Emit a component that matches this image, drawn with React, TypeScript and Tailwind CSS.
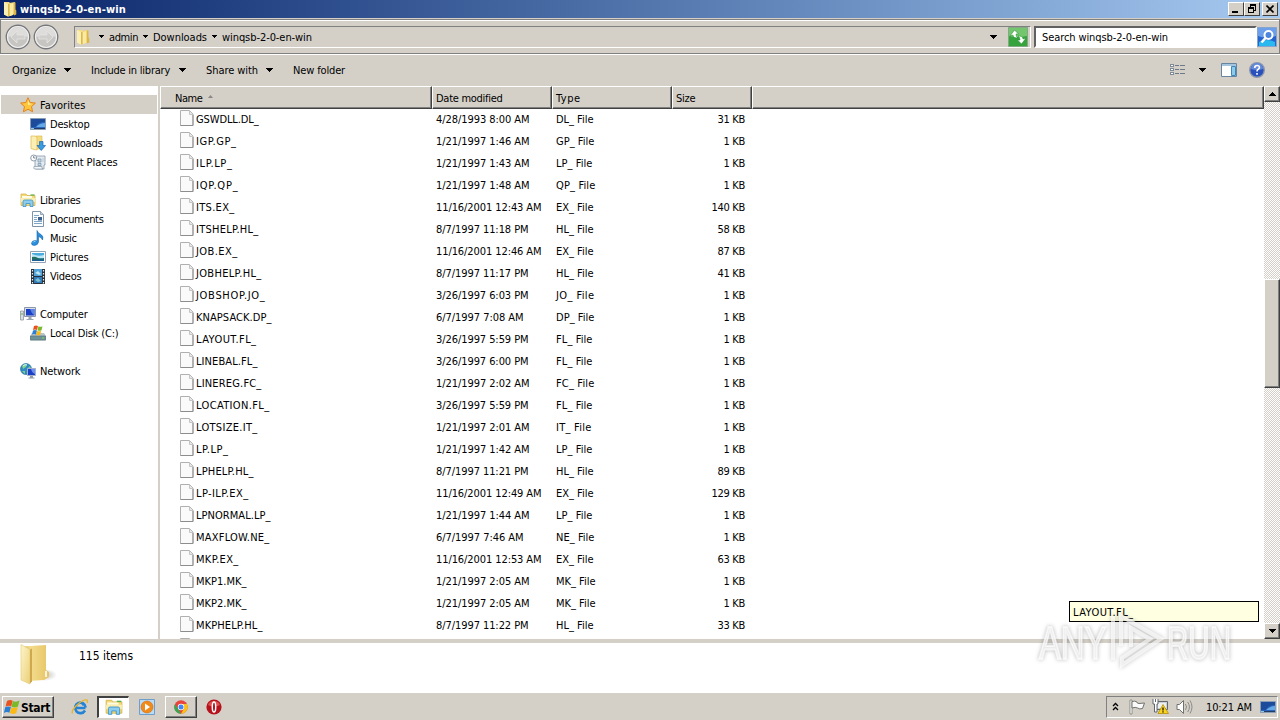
import React from 'react';

const files: string[][] = [
  ['GSWDLL.DL_', '4/28/1993 8:00 AM', 'DL_ File', '31 KB'],
  ['IGP.GP_', '1/21/1997 1:46 AM', 'GP_ File', '1 KB'],
  ['ILP.LP_', '1/21/1997 1:43 AM', 'LP_ File', '1 KB'],
  ['IQP.QP_', '1/21/1997 1:48 AM', 'QP_ File', '1 KB'],
  ['ITS.EX_', '11/16/2001 12:43 AM', 'EX_ File', '140 KB'],
  ['ITSHELP.HL_', '8/7/1997 11:18 PM', 'HL_ File', '58 KB'],
  ['JOB.EX_', '11/16/2001 12:46 AM', 'EX_ File', '87 KB'],
  ['JOBHELP.HL_', '8/7/1997 11:17 PM', 'HL_ File', '41 KB'],
  ['JOBSHOP.JO_', '3/26/1997 6:03 PM', 'JO_ File', '1 KB'],
  ['KNAPSACK.DP_', '6/7/1997 7:08 AM', 'DP_ File', '1 KB'],
  ['LAYOUT.FL_', '3/26/1997 5:59 PM', 'FL_ File', '1 KB'],
  ['LINEBAL.FL_', '3/26/1997 6:00 PM', 'FL_ File', '1 KB'],
  ['LINEREG.FC_', '1/21/1997 2:02 AM', 'FC_ File', '1 KB'],
  ['LOCATION.FL_', '3/26/1997 5:59 PM', 'FL_ File', '1 KB'],
  ['LOTSIZE.IT_', '1/21/1997 2:01 AM', 'IT_ File', '1 KB'],
  ['LP.LP_', '1/21/1997 1:42 AM', 'LP_ File', '1 KB'],
  ['LPHELP.HL_', '8/7/1997 11:21 PM', 'HL_ File', '89 KB'],
  ['LP-ILP.EX_', '11/16/2001 12:49 AM', 'EX_ File', '129 KB'],
  ['LPNORMAL.LP_', '1/21/1997 1:44 AM', 'LP_ File', '1 KB'],
  ['MAXFLOW.NE_', '6/7/1997 7:46 AM', 'NE_ File', '1 KB'],
  ['MKP.EX_', '11/16/2001 12:53 AM', 'EX_ File', '63 KB'],
  ['MKP1.MK_', '1/21/1997 2:05 AM', 'MK_ File', '1 KB'],
  ['MKP2.MK_', '1/21/1997 2:05 AM', 'MK_ File', '1 KB'],
  ['MKPHELP.HL_', '8/7/1997 11:22 PM', 'HL_ File', '33 KB'],
];

const raised = 'border border-t-white border-l-white border-r-[#404040] border-b-[#404040]';

// Advance widths of the 11px system face, used to keep labels at their native length
const advances: Record<string, number> = {
  ' ': 3, '!': 4, '(': 4, ')': 4, '-': 4, '.': 4, ',': 3, '/': 4, ':': 4, '_': 6,
  A: 7, B: 6, C: 7, D: 7, E: 6, F: 6, G: 7, H: 7, I: 4, J: 5, K: 6, L: 5, M: 8, N: 7, O: 8, P: 6,
  Q: 8, R: 7, S: 6, T: 6, U: 7, V: 6, W: 10, X: 6, Y: 6, Z: 6,
  a: 6, b: 6, c: 5, d: 6, e: 6, f: 4, g: 6, h: 6, i: 2, j: 3, k: 5, l: 2, m: 8, n: 6, o: 6, p: 6,
  q: 6, r: 4, s: 5, t: 4, u: 6, v: 6, w: 8, x: 6, y: 6, z: 5,
};

function Label({ text, width, className = '' }: { text: string; width?: number; className?: string }) {
  const ref = React.useRef<HTMLSpanElement>(null);

  React.useLayoutEffect(() => {
    const el = ref.current;
    if (!el) return;
    el.style.letterSpacing = '0px';
    const target = width ?? text.split('').reduce((sum, c) => sum + (advances[c] ?? 6), 0.5);
    el.style.letterSpacing = `${(target - el.getBoundingClientRect().width) / text.length}px`;
  }, [text, width]);

  return (
    <span className={`inline-block pt-0.5 whitespace-pre ${className}`}>
      <span ref={ref}>{text}</span>
    </span>
  );
}

function Caret({ small = false }: { small?: boolean }) {
  return small ? (
    <svg width="5" height="3" viewBox="0 0 5 3" shapeRendering="crispEdges"><path d="M0 0h5v1h-1v1h-1v1h-1v-1h-1v-1h-1z" /></svg>
  ) : (
    <svg width="7" height="4" viewBox="0 0 7 4" shapeRendering="crispEdges"><path d="M0 0h7v1h-1v1h-1v1h-1v1h-1v-1h-1v-1h-1v-1h-1z" /></svg>
  );
}

function FolderIcon() {
  return (
    <svg width="16" height="16" viewBox="0 0 16 16">
      <path d="M7 2l6-1v12l-5 2z" fill="#f0d477" />
      <path d="M8 3l3-1v12l-3 1z" fill="#f9e9a3" />
      <path d="M12 1.500h1.500v7l.8 1v4l-2.300 1z" fill="#d9b647" />
      <path d="M2 1h5l1 1v13l-2 .5-4-2z" fill="#f4dc83" />
      <path d="M2 1l4 2v12.500l-4-2z" fill="#fbefb4" />
      <path d="M6 3v12.500l1.500-.5v-12z" fill="#dcb94e" />
    </svg>
  );
}

function LargeFolderIcon() {
  return (
    <svg width="42" height="44" viewBox="0 0 42 44">
      <defs>
        <linearGradient id="folderBack" x1="0" y1="0" x2="1" y2="0">
          <stop offset="0" stopColor="#dcb95e" />
          <stop offset=".3" stopColor="#f3dc8c" />
          <stop offset="1" stopColor="#e6c466" />
        </linearGradient>
        <linearGradient id="folderFront" x1="0" y1="0" x2="1" y2="1">
          <stop offset="0" stopColor="#fdf5c9" />
          <stop offset="1" stopColor="#ecd07a" />
        </linearGradient>
        <radialGradient id="folderShade">
          <stop offset="0" stopColor="#777" stopOpacity=".45" />
          <stop offset="1" stopColor="#777" stopOpacity="0" />
        </radialGradient>
      </defs>
      <ellipse cx="31" cy="32" rx="12" ry="6" fill="url(#folderShade)" />
      <path d="M9 3.500l23-1.500v25l3 2v5l-5 3-16 1z" fill="url(#folderBack)" />
      <path d="M32 28v6" stroke="#fff" strokeWidth="1.600" />
      <path d="M7 1.500l9 5v34.500l-9-4z" fill="url(#folderFront)" stroke="#e3c976" strokeWidth=".6" />
      <path d="M16 6.500l2-1v33l-2 2z" fill="#cfa94c" />
    </svg>
  );
}

function LibraryIcon({ size = 16 }: { size?: number }) {
  return (
    <svg width={size} height={size} viewBox="0 0 16 16">
      <path d="M1 2h5l1 1.500h8v10h-14z" fill="#f3dc79" stroke="#d3ae41" strokeWidth=".7" />
      <path d="M2 4h10v2h-10z" fill="#fffbe4" />
      <path d="M10.500 3h4" stroke="#57b14c" strokeWidth="1.200" />
      <path d="M1 6h14v4h-14z" fill="#fbeeb1" />
      <path d="M3 14.500v-5q0-1.500 1.500-1.500h7q1.500 0 1.500 1.500v5h-3v-3h-4v3z" fill="#8dcdef" stroke="#3d91c8" strokeWidth=".8" />
    </svg>
  );
}

function StarIcon() {
  return (
    <svg width="16" height="16" viewBox="0 0 16 16">
      <path d="M8 .7l2.200 4.800 5.200.6-3.900 3.500 1.100 5.200L8 12.200l-4.600 2.600 1.100-5.200L.6 6.100l5.200-.6z" fill="#fdc63c" stroke="#e5821d" strokeWidth="1" />
      <path d="M8 3l1.500 3.500 3 .5-4.500 1z" fill="#fff0a0" />
    </svg>
  );
}

function DesktopIcon() {
  return (
    <svg width="16" height="16" viewBox="0 0 16 16">
      <path d="M.5 2.500h15v11h-15z" fill="#2a66be" stroke="#8b9cb4" />
      <path d="M1 3h14v3q-7 0-9 5h-5z" fill="#1d4b9c" />
      <path d="M6 11q4-4 9-4v4z" fill="#65a9e6" />
      <path d="M1 12h14v1h-14z" fill="#233c64" />
      <path d="M1 12h3v1h-3z" fill="#8dc8e8" />
    </svg>
  );
}

function DownloadsIcon() {
  return (
    <svg width="16" height="16" viewBox="0 0 16 16">
      <path d="M6 1h6v13h-6z" fill="#f4dc83" stroke="#d9b647" strokeWidth=".6" />
      <path d="M1 1h4l2 1v13l-3-.5-3-1z" fill="#fbefb4" stroke="#dcb94e" strokeWidth=".7" />
      <path d="M9.500 6.500h3.500v4h2.500l-4.200 5-4.300-5h2.500z" fill="#3a9be0" stroke="#1b68b0" strokeWidth=".7" />
    </svg>
  );
}

function RecentIcon() {
  return (
    <svg width="16" height="16" viewBox="0 0 16 16">
      <path d="M5 2h10v9h-1v4h-8q-2 0-1-2z" fill="#e4eaf0" stroke="#8798a8" strokeWidth=".8" />
      <path d="M8 5h3v3h-3zM8 9.500h3v2h-3zM12.500 5h1M12.500 7h1" fill="#c5d7e6" stroke="#7892a9" strokeWidth=".7" />
      <path d="M4 12.500h8q-.5 2.500 1 2.500h-8q-2 0-1-2.500z" fill="#f5f7f9" stroke="#8798a8" strokeWidth=".7" />
      <circle cx="3.700" cy="4" r="3" fill="#fff" stroke="#8d9ba9" />
      <path d="M3.700 2v2h1.800" fill="none" stroke="#546779" strokeWidth=".8" />
    </svg>
  );
}

function DocumentIcon() {
  return (
    <svg width="16" height="16" viewBox="0 0 16 16">
      <path d="M2.500.5h8l3 3v12h-11z" fill="#fbfdff" stroke="#8094a8" />
      <path d="M10.500.5v3h3" fill="#c5d6e5" stroke="#8094a8" strokeWidth=".8" />
      <path d="M4 4.500h5M4 6.500h3M4 8.500h3M4 10.500h8M4 12.500h8" stroke="#7fa6c6" />
      <path d="M8 6h4v3.500h-4z" fill="#3d5f8f" />
    </svg>
  );
}

function MusicIcon() {
  return (
    <svg width="16" height="16" viewBox="0 0 16 16">
      <path d="M7 .5q1 3 4 4 3 2 1.500 5.500-.8-3-4-3.500v5.500q-.5 3-4 3.500-3 0-3-2.200 .3-2.500 3.500-2.800 1 0 2 .4z" fill="#2a8fdc" stroke="#1767ae" strokeWidth=".6" />
      <path d="M3 12.500q.8-1.500 2.500-1.300" fill="none" stroke="#9edcf8" />
    </svg>
  );
}

function PictureIcon() {
  return (
    <svg width="16" height="16" viewBox="0 0 16 16">
      <path d="M.5 2.500h15v11h-15z" fill="#fff" stroke="#90a4b6" />
      <path d="M2 4h12v8h-12z" fill="#4bacde" />
      <path d="M2 5q6 3 12 1v3h-12z" fill="#bfe7f5" />
      <path d="M2 8q3-1 6 1 3 1 6 0v3h-12z" fill="#23705f" />
      <path d="M2 10.500h12v1.500h-12z" fill="#1c5c94" />
    </svg>
  );
}

function VideoIcon() {
  return (
    <svg width="16" height="16" viewBox="0 0 16 16">
      <path d="M1 1h14v15h-14z" fill="#26313c" />
      <path d="M4 1h8v7h-8z" fill="#4fa3d8" />
      <path d="M4 9h8v6h-8z" fill="#317bb8" />
      <path d="M5 5l3-2 3 3-2 1z" fill="#c1e4ee" />
      <path d="M5 12l3-2 3 3-3 1z" fill="#7fc0cf" />
      <path d="M2.500 2v14M13.500 2v14" stroke="#e8eef2" strokeWidth="1.200" strokeDasharray="1.500 1.500" />
    </svg>
  );
}

function ComputerIcon() {
  return (
    <svg width="16" height="16" viewBox="0 0 16 16">
      <path d="M.5 5h3v9h-3z" fill="#d7dde2" stroke="#8d989f" strokeWidth=".8" />
      <path d="M1.500 7h1v2h-1z" fill="#69b44b" />
      <path d="M4.500 1.500h11v9h-11z" fill="#d9dee8" stroke="#8c96aa" />
      <path d="M6 3h8.500v6.500h-8.500z" fill="#1b3fc4" />
      <path d="M10 3h4.500v6.500q-3-2-4.500-6.500z" fill="#5a83e8" />
      <path d="M8.500 11h3v2h2v1h-7v-1h2z" fill="#9ba5b1" />
    </svg>
  );
}

function WindowsFlag() {
  return (
    <svg width="16" height="16" viewBox="0 0 16 16">
      <path d="M3 2q3-2 5.700-.3l-1.500 5.800q-2.800-1.500-5.700.2z" fill="#e8541f" />
      <path d="M9 2q3 1.500 6.500-.4l-1.500 6q-3 1.700-6.500.2z" fill="#7ab929" />
      <path d="M1.200 8.300q3-1.700 5.700-.2l-1.500 5.700q-2.700-1.500-5.500.2z" fill="#2a7fd4" />
      <path d="M7.300 8.300q3 1.500 6.500-.2l-1.500 5.900q-3 1.700-6.500.1z" fill="#fbb916" />
    </svg>
  );
}

function DiskIcon() {
  return (
    <svg width="16" height="16" viewBox="0 0 16 16">
      <path d="M2 8h12l2 3v4.500h-16v-4.500z" fill="#b9c4c9" />
      <path d="M.5 11h15v4h-15z" fill="#6f9299" stroke="#56727a" strokeWidth=".7" />
      <path d="M12 12.500h2v1h-2z" fill="#78e04b" />
      <path d="M4 1q2-1 4 0l-1 4q-2-1-4 0z" fill="#e8541f" />
      <path d="M8.500 1.200q2 1 4 0l-1 4q-2 1-4 0z" fill="#7ab929" />
      <path d="M3 5.500q2-1 4 0l-1 4q-2-1-4 0z" fill="#2a7fd4" />
      <path d="M7.200 5.700q2 1 4 0l-1 4q-2 1-4 0z" fill="#fbb916" />
    </svg>
  );
}

function NetworkIcon() {
  return (
    <svg width="16" height="16" viewBox="0 0 16 16">
      <circle cx="6" cy="6" r="5.500" fill="#2f8bc4" stroke="#1a6090" strokeWidth=".6" />
      <path d="M2 3q3-3 5-2l-1 3-3 2zM7 6l3-3 1 3-2 3zM2 8l3 0 0 3z" fill="#7fd08a" />
      <path d="M3 3q2-2 4-1" stroke="#d6f5f8" fill="none" />
      <path d="M7.500 5.500h8v7h-8z" fill="#1b3fc4" stroke="#a5b1cc" />
      <path d="M11 6h4v5q-3-1-4-5z" fill="#6b92ee" />
      <path d="M10 13h3v1.500h1.500v1h-6v-1h1.500z" fill="#929daa" />
    </svg>
  );
}

function FileIcon() {
  return (
    <svg width="14" height="16" viewBox="0 0 14 16" className="shrink-0">
      <path d="M.5.5h9l3.500 3.500v11.500h-12.500z" fill="#fafafa" stroke="#b0b0b0" />
      <path d="M9.500 1v3.500h3.500" fill="#e6e6e6" stroke="#c4c4c4" />
      <path d="M13 5v10.500h-12.500" fill="none" stroke="#8d8d8d" />
    </svg>
  );
}

function NavArrow({ flip = false }: { flip?: boolean }) {
  return (
    <svg width="26" height="26" viewBox="0 0 26 26">
      <circle cx="13" cy="13" r="11.700" fill="#c7c5c2" stroke="#74777b" strokeWidth="1.400" />
      <circle cx="13" cy="13" r="10.500" fill="none" stroke="#efefee" strokeWidth="1.200" />
      <path d="M3 13a10 10 0 0 1 20 0q-10-3-20 0z" fill="#dedddb" />
      <path
        d={flip ? 'M20 13l-6-6v4h-8v4h8v4z' : 'M6 13l6-6v4h8v4h-8v4z'}
        fill="#d0cfcd"
        stroke="#e4e4e2"
        strokeWidth=".8"
      />
    </svg>
  );
}

function NavItem({ icon, text, level = 1, active = false }: { icon: React.ReactNode; text: string; level?: number; active?: boolean }) {
  return (
    <div className={`flex h-[19px] items-center gap-1 ${level === 0 ? 'pl-[19px]' : 'pl-[29px]'} ${active ? 'bg-[#d4d0c8]' : ''}`}>
      {icon}
      <Label text={text} />
    </div>
  );
}

function Sidebar() {
  return (
    <div className="flex w-[157px] shrink-0 flex-col gap-[19px] bg-white pt-[9px] pl-px">
      <div>
        <NavItem level={0} active icon={<StarIcon />} text="Favorites" />
        <NavItem icon={<DesktopIcon />} text="Desktop" />
        <NavItem icon={<DownloadsIcon />} text="Downloads" />
        <NavItem icon={<RecentIcon />} text="Recent Places" />
      </div>
      <div>
        <NavItem level={0} icon={<LibraryIcon />} text="Libraries" />
        <NavItem icon={<DocumentIcon />} text="Documents" />
        <NavItem icon={<MusicIcon />} text="Music" />
        <NavItem icon={<PictureIcon />} text="Pictures" />
        <NavItem icon={<VideoIcon />} text="Videos" />
      </div>
      <div>
        <NavItem level={0} icon={<ComputerIcon />} text="Computer" />
        <NavItem icon={<DiskIcon />} text="Local Disk (C:)" />
      </div>
      <NavItem level={0} icon={<NetworkIcon />} text="Network" />
    </div>
  );
}

function TitleBar() {
  return (
    <div className="flex h-[18px] items-center bg-linear-to-r from-[#0a246a] to-[#a6caf0] pr-[2px] pl-[2px]">
      <FolderIcon />
      <Label text="winqsb-2-0-en-win" width={106} className="ml-[2px] font-bold text-white" />
      <div className="ml-auto flex">
        <div className={`flex h-[14px] w-4 items-end bg-[#d4d0c8] pb-[2px] pl-[3px] ${raised}`}>
          <span className="h-[2px] w-[6px] bg-black" />
        </div>
        <div className={`flex h-[14px] w-4 items-center justify-center bg-[#d4d0c8] ${raised}`}>
          <svg width="9" height="10" viewBox="0 0 9 10" shapeRendering="crispEdges">
            <path d="M2.500 3v-2h5v5h-2M.5 4.500h5v4h-5z" fill="none" stroke="#000" />
            <path d="M2 0h6v2h-6zM0 3h6v2h-6z" />
          </svg>
        </div>
        <div className={`ml-[2px] flex h-[14px] w-4 items-center justify-center bg-[#d4d0c8] ${raised}`}>
          <svg width="8" height="8" viewBox="0 0 8 8"><path d="M.5.5l7 7M7.500.5l-7 7" stroke="#000" strokeWidth="1.600" /></svg>
        </div>
      </div>
    </div>
  );
}

function AddressBar() {
  return (
    <div className="mt-px flex h-[35px] items-center border border-[#808080] pl-[4px] shadow-[inset_0_1px_0_#fff,0_1px_0_#fff]">
      <div className="flex gap-[2px]">
        <NavArrow />
        <NavArrow flip />
      </div>
      <div className="ml-[15px] flex h-[22px] w-[957px] shrink-0 items-center border border-t-[#808080] border-l-[#808080] border-r-white border-b-white">
        <FolderIcon />
        <div className="ml-[8px] flex items-center gap-[5px]">
          <Caret small />
          <Label text="admin" width={29} />
          <Caret small />
          <Label text="Downloads" width={54} />
          <Caret small />
          <Label text="winqsb-2-0-en-win" width={90} />
        </div>
        <span className="mr-[33px] ml-auto"><Caret /></span>
      </div>
      <svg width="20" height="20" viewBox="0 0 20 20" className="-ml-[23px] shrink-0">
        <path d="M.5.500h19v19h-19z" fill="#36a33d" stroke="#84a883" />
        <path d="M1 1h18v8q-9 2-18 0z" fill="#73c66d" />
        <path d="M2 9l4.500-6 4 4h-2.500q0 3 2 4-5 0-5-3zM18 11l-4.500 6-4-4h2.500q0-3-2-4 5 0 5 3z" fill="#fff" stroke="#1a8a2a" strokeWidth=".5" />
      </svg>
      <div className="ml-[6px] flex h-[22px] w-[223px] shrink-0 items-center border-2 border-t-[#606060] border-l-[#606060] border-r-white border-b-white bg-white pl-[6px]">
        <Label text="Search winqsb-2-0-en-win" width={126} />
      </div>
      <svg width="20" height="20" viewBox="0 0 20 20" className="shrink-0">
        <path d="M.5.5h19v19h-19z" fill="#2563cd" stroke="#86a5cd" />
        <path d="M1 1h18v8q-10 3-18 0z" fill="#6d9eea" />
        <path d="M2 15q8-4 16 0v4h-16z" fill="#29b8ef" />
        <circle cx="11.500" cy="8" r="4" fill="#4d84dc" stroke="#fff" strokeWidth="2" />
        <path d="M8.500 11l-4 4.500" stroke="#fff" strokeWidth="2.600" />
      </svg>
    </div>
  );
}

function Toolbar() {
  return (
    <div className="flex h-[32px] items-center pl-3">
      <Label text="Organize" width={44} />
      <span className="ml-2"><Caret /></span>
      <Label text="Include in library" width={79} className="ml-5" />
      <span className="ml-[9px]"><Caret /></span>
      <Label text="Share with" width={52} className="ml-5" />
      <span className="ml-2"><Caret /></span>
      <Label text="New folder" width={52} className="ml-5" />
      <div className="mr-[15px] ml-auto flex items-center">
        <svg width="16" height="12" viewBox="0 0 16 12" shapeRendering="crispEdges">
          <path d="M.5.5h3v2h-3zM.5 4.500h3v2h-3zM.5 8.500h3v2h-3z" fill="#fff" stroke="#7f8b96" />
          <path d="M5 1.500h4M5 5.500h4M5 9.500h4M10 1.500h5M10 5.500h5M10 9.500h5" stroke="#6d7a89" />
        </svg>
        <span className="ml-[13px]"><Caret /></span>
        <svg width="16" height="14" viewBox="0 0 16 14" className="ml-[15px]">
          <path d="M.5.500h15v13h-15z" fill="#fff" stroke="#6785a1" />
          <path d="M1 1h14v2h-14z" fill="#a5c5df" />
          <path d="M10.500 3.500h4v9h-4z" fill="#8dcbea" stroke="#3f86b8" />
        </svg>
        <svg width="16" height="16" viewBox="0 0 16 16" className="ml-3">
          <circle cx="8" cy="8" r="7.300" fill="#2a50bb" stroke="#8c97ad" strokeWidth="1.400" />
          <path d="M2 7a6 6 0 0 1 12 0q-6 2-12 0z" fill="#6289dd" />
          <path d="M5.700 6q0-2.500 2.400-2.500t2.300 2q0 1-1.200 1.800-1.200.7-1.200 2.200M8 11v1.700" fill="none" stroke="#fff" strokeWidth="1.600" />
        </svg>
      </div>
    </div>
  );
}

function HeaderCell({ text, className, children }: { text: string; className: string; children?: React.ReactNode }) {
  return (
    <div className={`flex h-[23px] shrink-0 items-center border-t border-r border-b border-l border-t-white border-l-white border-r-[#404040] border-b-[#404040] bg-[#d4d0c8] shadow-[inset_-1px_-1px_0_#808080] ${className}`}>
      {text && <Label text={text} />}
      {children}
    </div>
  );
}

function FileList() {
  return (
    <div className="flex min-w-0 flex-1 flex-col overflow-hidden bg-white">
      <div className="flex shrink-0">
        <HeaderCell text="Name" className="w-[272px] pl-[14px]">
          <svg width="5" height="3" viewBox="0 0 5 3" className="mb-[3px] ml-[5px]"><path d="M0 3l2.500-3 2.500 3z" fill="#8b8784" /></svg>
        </HeaderCell>
        <HeaderCell text="Date modified" className="w-[120px] pl-[3px]" />
        <HeaderCell text="Type" className="w-[120px] pl-[3px]" />
        <HeaderCell text="Size" className="w-[80px] pl-[3px]" />
        <HeaderCell text="" className="w-[512px]" />
      </div>
      <div className="-mt-px">
        {files.map(([name, date, type, size]) => (
          <div key={name} className="flex h-[22px] items-center">
            <div className="flex w-[276px] items-center gap-[2px] pl-5">
              <span className="mb-0.5"><FileIcon /></span>
              <Label text={name} />
            </div>
            <div className="flex w-[120px]"><Label text={date} /></div>
            <div className="flex w-[120px]"><Label text={type} /></div>
            <div className="flex w-[69px] justify-end"><Label text={size} /></div>
          </div>
        ))}
        <div className="pt-0.5 pl-5"><FileIcon /></div>
      </div>
    </div>
  );
}

function ScrollBar() {
  return (
    <div className="flex w-4 shrink-0 flex-col bg-[repeating-conic-gradient(#d4d0c8_0_25%,#fff_0_50%)] bg-size-[2px_2px]">
      <div className={`flex h-4 items-center justify-center bg-[#d4d0c8] shadow-[inset_-1px_-1px_0_#808080] ${raised}`}>
        <span className="rotate-180"><Caret /></span>
      </div>
      <div className={`mt-[177px] h-[109px] bg-[#d4d0c8] shadow-[inset_-1px_-1px_0_#808080] ${raised}`} />
      <div className={`mt-auto flex h-4 items-center justify-center bg-[#d4d0c8] shadow-[inset_-1px_-1px_0_#808080] ${raised}`}>
        <Caret />
      </div>
    </div>
  );
}

function Taskbar() {
  return (
    <div className="flex h-[28px] items-center border-t border-white bg-[#d4d0c8] pl-[2px]">
      <div className={`flex h-[22px] w-[52px] items-center gap-px pl-px shadow-[inset_-1px_-1px_0_#808080] ${raised}`}>
        <WindowsFlag />
        <Label text="Start" width={29} className="pt-0 text-[12px] font-bold" />
      </div>
      <svg width="18" height="18" viewBox="0 0 18 18" className="ml-[17px]">
        <path d="M14.500 10h-9.500a4.200 4.200 0 0 1 8-2.500M14 12.500a5.300 5.300 0 1 1 .7-3" fill="none" stroke="#2483d5" strokeWidth="2.600" />
        <path d="M1.500 15.500q-1.500-2.500 4-8 7-6.500 10.500-5.500 1 .6 0 3" fill="none" stroke="#e6b52e" strokeWidth="1.400" />
      </svg>
      <div className="ml-[8px] flex h-[22px] w-8 items-center justify-center border-2 border-r border-b border-t-[#404040] border-l-[#404040] border-r-white border-b-white bg-white">
        <LibraryIcon size={18} />
      </div>
      <svg width="16" height="16" viewBox="0 0 16 16" className="ml-[10px]">
        <path d="M.5.5h15v15h-15z" fill="#b9dbf5" stroke="#6e9fca" />
        <circle cx="8" cy="8" r="6" fill="#f18a18" stroke="#d46c0a" strokeWidth=".6" />
        <path d="M6 4.500l5 3.500-5 3.500z" fill="#fff" />
      </svg>
      <div className={`ml-[10px] flex h-[22px] w-8 items-center justify-center shadow-[inset_-1px_-1px_0_#808080] ${raised}`}>
        <svg width="14" height="14" viewBox="0 0 14 14">
          <circle cx="7" cy="7" r="6.700" fill="#e8453c" />
          <path d="M.9 4l3.300 5 2.800 4.700a6.700 6.700 0 0 1-6.100-9.700z" fill="#34a853" />
          <path d="M7 4h6a6.700 6.700 0 0 1-6 9.700l3-5.200z" fill="#fbc116" />
          <circle cx="7" cy="7" r="3.200" fill="#fff" />
          <circle cx="7" cy="7" r="2.500" fill="#4285f4" />
        </svg>
      </div>
      <svg width="16" height="16" viewBox="0 0 16 16" className="ml-[9px]">
        <circle cx="8" cy="8" r="7.600" fill="#b5121c" />
        <path d="M2 6a6.500 6.500 0 0 1 12 0q-6 3-12 0z" fill="#dc5350" />
        <ellipse cx="8" cy="8" rx="1.700" ry="5" fill="#a80e17" stroke="#fff" strokeWidth="1.500" />
      </svg>
      <div className="mr-[2px] ml-auto flex h-[22px] w-[172px] items-center border border-t-[#808080] border-l-[#808080] border-r-white border-b-white pl-[5px]">
        <svg width="7" height="9" viewBox="0 0 7 9"><path d="M1 4l2.500-2.500 2.500 2.500M1 8l2.500-2.500 2.500 2.500" fill="none" stroke="#000" strokeWidth="1.300" /></svg>
        <svg width="17" height="16" viewBox="0 0 17 16" className="ml-[10px]">
          <path d="M1 1h2v14h-2z" fill="#fff" stroke="#71716f" strokeWidth=".7" />
          <path d="M3 2.500q3-1 5 .5 0 1.500 2 1.500l5.500-.5-2 5.500q-3 1-5-.5-2-1.300-5.500 0z" fill="#fafafa" stroke="#71716f" />
        </svg>
        <svg width="17" height="17" viewBox="0 0 17 17" className="ml-[6px]">
          <path d="M4.500 3.500h11v8h-11z" fill="#cbd2d6" stroke="#62676b" />
          <path d="M6 5h8v5h-8z" fill="#eef1f3" />
          <path d="M1 1v5h1.500v8h2.500v-8h1v-5M3.500 1v3" fill="#fff" stroke="#62676b" />
          <path d="M11 6.500l5.500 9h-10.500z" fill="#fbd51c" stroke="#b18c0c" strokeWidth=".8" />
          <path d="M11 9.500v3M11 13.300v1.200" stroke="#000" strokeWidth="1.200" />
        </svg>
        <svg width="17" height="16" viewBox="0 0 17 16" className="ml-[7px]">
          <path d="M1 5.500h2.500l4-4v13l-4-4h-2.500z" fill="#fff" stroke="#71716f" />
          <path d="M9.500 5q2 3 0 6M11.700 3q3.500 5 0 10M14 1.500q4 6.500 0 13" fill="none" stroke="#8b8b88" />
        </svg>
        <Label text="10:21 AM" width={46} className="ml-[13px]" />
        <span className="ml-[8px]"><DesktopIcon /></span>
      </div>
    </div>
  );
}

export default function App() {
  return (
    <div className="relative flex h-[720px] w-[1280px] flex-col overflow-hidden bg-[#d4d0c8] font-['DejaVu_Sans_Condensed','DejaVu_Sans',sans-serif] text-[11px] leading-[14px] text-black">
      <TitleBar />
      <AddressBar />
      <Toolbar />
      <div className="flex h-[553px] shrink-0">
        <Sidebar />
        <div className="w-[3px] shrink-0 border-l border-white" />
        <FileList />
        <ScrollBar />
      </div>
      <div className="mt-[4px] flex h-[49px] shrink-0 bg-white">
        <span className="ml-[14px]"><LargeFolderIcon /></span>
        <Label text="115 items" width={54} className="mt-[4px] ml-[23px] text-[12px]" />
      </div>
      <Taskbar />
      <div className="absolute top-[601px] left-[1069px] flex h-[21px] w-[190px] items-center border border-black bg-[#ffffe1] pl-[3px]">
        <Label text="LAYOUT.FL_" />
      </div>
      <div className="absolute top-[612px] left-[1039px] flex h-[60px] w-[195px] items-center font-['Liberation_Sans',sans-serif] text-[47px] leading-[56px] text-white/65 drop-shadow-[0_0_2px_rgba(0,0,0,0.35)]">
        <span className="flex w-[70px] origin-left scale-x-[0.7] [-webkit-text-stroke:2px_rgba(255,255,255,0.65)]"><Label text="ANY" width={67} /></span>
        <svg width="56" height="60" viewBox="0 0 56 60" fill="none" stroke="currentColor" strokeWidth="4" className="shrink-0">
          <path d="M4 4v44M12 34v-30l40 23-39 26v-7l28-19-19-11v19" />
        </svg>
        <span className="ml-[2px] flex w-[64px] origin-left scale-x-[0.63] [-webkit-text-stroke:2px_rgba(255,255,255,0.65)]"><Label text="RUN" width={64} /></span>
      </div>
    </div>
  );
}
